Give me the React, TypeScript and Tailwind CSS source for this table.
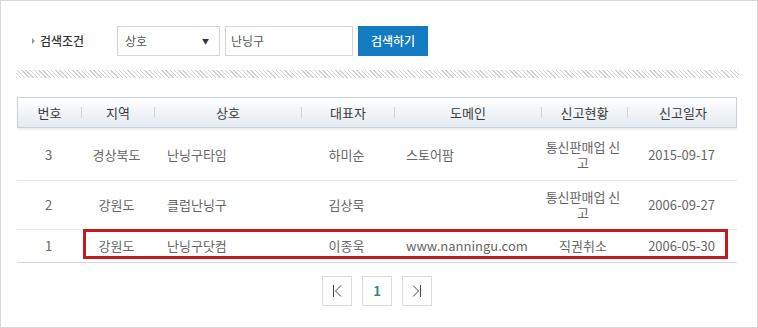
import React from "react";

const cols = ["번호", "지역", "상호", "대표자", "도메인", "신고현황", "신고일자"];

const rows = [
  { no: "3", region: "경상북도", name: "난닝구타임", ceo: "하미순", domain: "스토어팜", status: "통신판매업 신고", date: "2015-09-17" },
  { no: "2", region: "강원도", name: "클럽난닝구", ceo: "김상묵", domain: "", status: "통신판매업 신고", date: "2006-09-27" },
  { no: "1", region: "강원도", name: "난닝구닷컴", ceo: "이종욱", domain: "www.nanningu.com", status: "직권취소", date: "2006-05-30" },
];

const gridCols = "grid grid-cols-[63px_73px_147px_93px_147px_86px_111px]";

const App: React.FC = () => {
  return (
    <div className="relative w-[758px] h-[328px] border border-[#d9d9d9] bg-white text-[13px] text-[#666] font-['Noto_Sans_CJK_KR','Noto_Sans',sans-serif]">
      {/* Search bar */}
      <div className="flex items-center pt-[25px] pl-[31px]">
        <div className="flex items-center w-[85px] gap-[5px]">
          <span className="w-0 h-0 border-y-[3px] border-y-transparent border-l-[3px] border-l-[#999]" />
          <span className="text-[12px] text-[#333] font-medium">검색조건</span>
        </div>
        <div className="flex items-center justify-between w-[103px] h-[30px] border border-[#d4d4d4] pl-[7px] pr-[10px] text-[12px] text-[#555]">
          <span>상호</span>
          <span className="text-[7px] text-[#333]">▼</span>
        </div>
        <div className="flex items-center ml-[5px] w-[128px] h-[30px] border border-[#d4d4d4] pl-[5px] text-[12px] text-[#555]">
          난닝구
        </div>
        <button className="ml-[5px] w-[70px] h-[30px] bg-[#137bbf] text-white text-[12px] font-medium">
          검색하기
        </button>
      </div>

      {/* Hatched divider */}
      <div className="mt-[14px] ml-[15px] w-[723px] h-[8px] bg-[repeating-linear-gradient(45deg,#d2d2d2_0px,#d2d2d2_1px,transparent_1px,transparent_3px)]" />

      {/* Table */}
      <div className="mt-[19px] ml-[16px] w-[720px]">
        <div className={`${gridCols} h-[31px] border border-[#c9d3dc] bg-gradient-to-b from-white to-[#e3eaf0] shadow-[0_2px_2px_rgba(0,0,0,0.07)] text-[13px] text-[#3a3a3a]`}>
          {cols.map((c, i) => (
            <div key={c} className="flex items-center">
              {i > 0 && <span className="w-px h-[11px] bg-[#cfd5db]" />}
              <span className="flex-1 text-center">{c}</span>
            </div>
          ))}
        </div>

        {rows.map((r, i) => (
          <div
            key={r.no}
            className={`${gridCols} items-center border-b leading-[16px] ${
              i === rows.length - 1 ? "border-[#d6d6d6] py-[8px]" : "border-[#e6e6e6]"
            } ${i === 0 ? "pt-[11px] pb-[9px]" : ""} ${i === 1 ? "py-[8px]" : ""}`}
          >
            <div className="text-center">{r.no}</div>
            <div className="text-center">{r.region}</div>
            <div className="pl-[14px]">{r.name}</div>
            <div className="text-center">{r.ceo}</div>
            <div className="pl-[13px]">{r.domain}</div>
            <div className="text-center break-all">{r.status}</div>
            <div className="text-center">{r.date}</div>
          </div>
        ))}

        {/* Pagination */}
        <div className="flex justify-center gap-[10px] mt-[13px]">
          <button className="w-[30px] h-[30px] border border-[#dcdcdc] flex items-center justify-center">
            <svg width="10" height="12" viewBox="0 0 10 12" fill="none" stroke="#444" strokeWidth="1">
              <line x1="1.5" y1="0" x2="1.5" y2="12" />
              <polyline points="9,0.5 3.5,6 9,11.5" />
            </svg>
          </button>
          <button className="w-[30px] h-[30px] border border-[#dcdcdc] flex items-center justify-center text-[13px] font-bold text-[#2e8a8a]">
            1
          </button>
          <button className="w-[30px] h-[30px] border border-[#dcdcdc] flex items-center justify-center">
            <svg width="10" height="12" viewBox="0 0 10 12" fill="none" stroke="#444" strokeWidth="1">
              <line x1="8.5" y1="0" x2="8.5" y2="12" />
              <polyline points="1,0.5 6.5,6 1,11.5" />
            </svg>
          </button>
        </div>
      </div>

      {/* Highlight box */}
      <div className="absolute left-[82px] top-[228px] w-[645px] h-[30px] border-[3px] border-[#bf1d22]" />
    </div>
  );
};

export default App;
